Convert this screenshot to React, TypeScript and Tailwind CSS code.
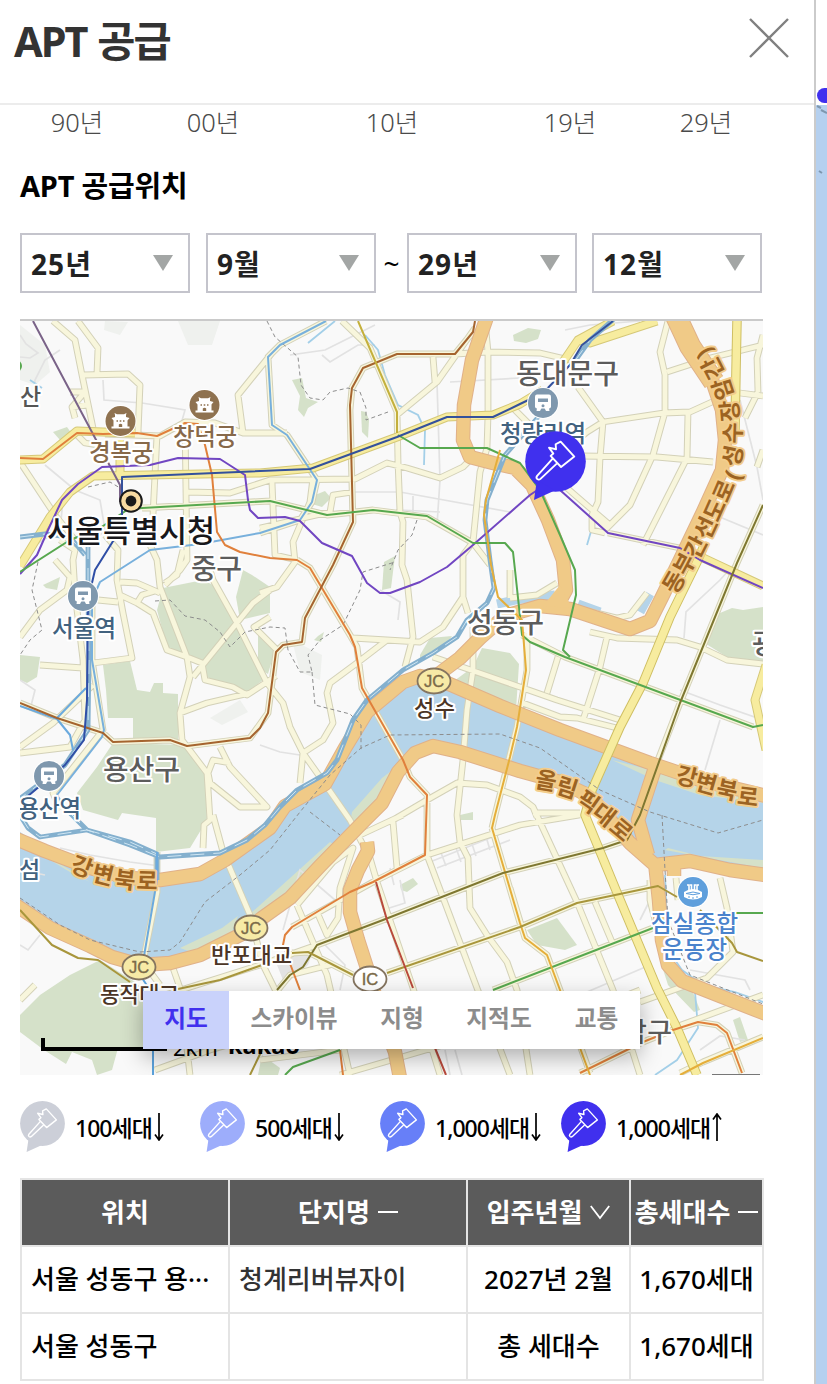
import { useState } from "react";
import type { ReactNode } from "react";

const YEARS = [
  { label: "90년", cell: "w-[154px]" },
  { label: "00년", cell: "w-[118px]" },
  { label: "10년", cell: "w-[240px]" },
  { label: "19년", cell: "w-[116px]" },
  { label: "29년", cell: "w-[156px]" },
];

const TABS = [
  { label: "지도", cell: "w-[86px]" },
  { label: "스카이뷰", cell: "w-[130px]" },
  { label: "지형", cell: "w-[86px]" },
  { label: "지적도", cell: "w-[108px]" },
  { label: "교통", cell: "w-[87px]" },
];

const LEGEND = [
  { label: "100세대", arrow: "↓", color: "#cccfd8", cell: "w-[180px]" },
  { label: "500세대", arrow: "↓", color: "#9dadfb", cell: "w-[180px]" },
  { label: "1,000세대", arrow: "↓", color: "#677ff8", cell: "w-[181px]" },
  { label: "1,000세대", arrow: "↑", color: "#4030ee", cell: "w-[180px]" },
];

// ---- map geometry ----

const RIVER =
  "M20 832L45 848L90 866L160 878L200 873L225 858L270 828L285 804L325 782L345 745L367 710L403 680L440 676L500 706L560 733L650 765L763 795V872L690 860L655 862L623 842L590 795L520 771L460 752L433 745L413 755L396 780L376 808L350 826L318 866L285 905L250 925L200 955L170 964L140 966L110 957L90 945L50 928L20 907Z";

const PARKS = [
  "M163 588L203 580L215 586L227 603L237 625L267 677L247 692L228 686L207 677L202 660L187 655L167 647L157 610Z",
  "M243 570L252 575L270 587V613L253 617L240 620L236 597Z",
  "M103 665L130 661L137 690L150 692L154 683H163V693L178 694V740L133 738V718H108L106 690Z",
  "M113 743L187 745L205 773L207 820L190 848L156 852V818L122 813L118 820L83 810L77 793L97 767Z",
  "M20 655L40 657L37 677L27 683L20 680Z",
  "M20 1032V1015L40 995L70 975L100 960L135 982L155 1000L145 1048L118 1048L112 1070L97 1075L92 1060L72 1052L66 1064L44 1050Z",
  "M258 625L275 650L268 674L258 668Z",
  "M384 562L395 556L391 588L382 590Z",
  "M318 636L324 632L321 642L314 640Z",
  "M420 655L430 638L452 636L445 646L420 662Z",
  "M482 648L510 653L519 664L516 710L450 684L473 667Z",
  "M720 613L732 608L743 610L763 607V662L727 657L703 642Z",
  "M527 930L557 918L577 945L565 950L537 945Z",
  "M400 885L413 878L418 884L407 892L401 890Z",
  "M292 380L302 378L306 398L318 402L308 408L304 417L298 410L300 396Z",
  "M361 411L366 412L369 420L368 438L362 432Z",
  "M310 497L325 491L331 498L322 507L312 504Z",
  "M513 335L528 328L541 330L538 339L526 343L514 341Z",
  "M53 432L67 427L72 434L60 440Z",
  "M43 585L60 577L57 590L46 588Z",
  "M460 815L473 812V820H461Z",
  "M258 1075L262 1055L280 1068L278 1075Z",
  "M658 930L670 960L690 985L700 1010L694 1012L668 985L660 960Z",
  "M733 1020L740 1017L748 1040L740 1042Z",
  "M612 760L655 780L700 795L763 803V797L690 780Z",
  "M665 850L763 868V860L700 856L668 848Z",
  "M350 824L376 806L398 770L408 758L382 778L352 812Z",
  "M20 842L70 872L90 882L60 864L20 836Z",
  "M240 923L330 842L336 846L290 904Z",
  "M180 948L222 928L238 916L230 938L200 955Z",
];

const HAZE = [
  "M20 325L45 345L50 372L35 385L20 380Z",
  "M105 321L128 322L120 335L104 330Z",
  "M178 321H220L212 345L188 345Z",
  "M292 640L322 655L320 680L300 672Z",
  "M210 718L240 700L248 712L222 725Z",
];

const LANES = [
  "M60 350L45 360L35 380L33 400",
  "M20 335L26 344L38 353L30 358L20 357",
  "M103 380L104 400L142 403L185 410L178 435",
  "M290 355L325 350L345 340L375 325",
  "M322 355L330 362L358 345L375 345",
  "M45 465L75 490L100 500L105 530L90 545",
  "M353 492L400 492L510 512",
  "M437 382L440 480L437 525",
  "M450 382L520 378",
  "M400 510L440 512M413 496V512",
  "M565 330L590 325L640 321",
  "M680 690L720 705L763 720M720 720L705 770",
  "M20 680L35 690L30 710",
  "M260 745L280 752L300 755",
  "M380 590L400 602L398 620",
  "M684 638L686 612L720 580L738 560",
  "M60 848L90 855L130 862L160 866",
  "M283 930L300 870L335 900",
  "M430 862L505 832M437 868L510 840M440 850L446 866M455 845L461 862M470 838L476 856M485 833L490 850",
  "M390 868L394 885M383 910L405 903L400 880",
  "M320 940L345 965L340 990",
  "M580 995L650 965M640 920L655 890",
  "M690 970L745 980L750 990M700 1050L720 1036L745 1040",
  "M445 1050L450 1075M455 1050L462 1075",
  "M740 400L757 467L763 500M715 515L763 535",
  "M20 945L28 950L40 935",
  "M20 870L45 875M35 545L60 530L63 500",
];

const STREETS = [
  "M53 321L75 340L82 375L93 428",
  "M78 321L98 348L97 373",
  "M83 375L128 374L140 385L138 433",
  "M70 392H85L72 407L75 418M72 407L87 405",
  "M75 433L85 443L103 446",
  "M105 434L160 436L185 422L215 423L243 433L287 433",
  "M272 353L238 395L243 433",
  "M157 435L153 515",
  "M185 422L187 560L180 570L165 585",
  "M187 492L230 493L270 480L355 479L387 463L407 468L440 478L463 467L475 455",
  "M20 462L55 515L75 540",
  "M60 540L75 550L73 560L75 593L83 660L85 720L70 747L20 753",
  "M342 321L370 348L397 412L398 462L400 512L403 522L402 565L407 580L413 637L405 667",
  "M475 328L437 382L397 415",
  "M433 357L435 382",
  "M473 332L455 354H397L363 368L352 388L350 410L353 522L333 565L305 618L302 642L283 645L276 652L268 713L250 738L187 746",
  "M455 354L487 352L540 353L570 360",
  "M485 321L488 352V415L487 448L480 472L473 542L463 555V597L468 613",
  "M272 482L275 555L297 560",
  "M313 478L310 502L293 542L295 562L277 587L260 593",
  "M260 528L330 512L333 495L353 492",
  "M142 508L270 501L327 515L373 510L427 517L473 543L490 565",
  "M326 321L280 345L268 357L272 425L287 435L317 480L312 502L300 520L260 533",
  "M668 321L660 352L665 375V412L653 455L630 505L607 528L592 515",
  "M667 372L710 358L763 345",
  "M603 422L663 413L690 412L712 402",
  "M578 387L603 422L600 458L598 502L592 515V530L605 533",
  "M603 422L587 432L565 450",
  "M580 456L657 457L713 462",
  "M688 412L687 458L643 545",
  "M560 482L590 508L610 525",
  "M608 533L680 548",
  "M763 335L757 358L758 392M740 393L763 396M745 418L758 392",
  "M757 467L763 450",
  "M510 405L530 425L545 430",
  "M20 637L40 610L67 590L70 577L55 560",
  "M93 663L132 658L123 613L117 580L118 550L105 535",
  "M40 665L83 668",
  "M98 600L118 602M120 582L137 583L160 593M120 595L137 603L153 613L167 650L187 657M137 603L142 595L155 591",
  "M150 545L157 560L160 587L187 657L190 677L180 713L182 740L207 773L210 820L204 825L203 848",
  "M165 583L177 575L183 550",
  "M207 560L213 580L237 623L267 683L283 703L290 727L303 753L320 777L350 820L370 858L377 882",
  "M270 590L253 603L193 677M270 617L254 627L277 650",
  "M187 657L202 663L205 680L233 687L247 695L276 676",
  "M180 713L207 703L250 693",
  "M20 747L53 723L93 685",
  "M20 703L57 718L103 733L113 742L170 740L187 746",
  "M92 600L92 660L103 730L53 793L60 810",
  "M220 747L230 767L267 807L240 807L210 783L208 773L213 760L230 763",
  "M297 560L310 568L350 635L357 647L362 688L403 760L410 777L427 795V855",
  "M353 638L420 642L443 627L463 597",
  "M387 640L357 663L330 683L327 693L333 723L323 740L303 753L300 783",
  "M473 627V670L467 710L463 760L457 815L460 842L468 858L470 908L487 935L507 962L517 990L530 1075",
  "M433 657L520 687L557 700L620 720",
  "M520 702L560 717L577 718L617 728",
  "M393 820L427 800L457 783L487 785L520 797L533 807L537 817",
  "M510 598L537 595L557 583M510 570V598",
  "M585 610L617 618L630 615L647 593",
  "M590 632L617 638L677 640L700 647L727 660L763 664",
  "M607 637L600 667L583 720",
  "M558 657L547 693",
  "M522 635L565 657L753 727",
  "M763 505L737 563L680 703L653 773",
  "M213 815L223 852L250 915L263 965L290 1020",
  "M157 852V892L143 962L160 985",
  "M173 968L180 988L190 1075",
  "M165 995L260 965L317 945L383 920L503 873L603 848L627 840",
  "M360 835L403 815M393 822L397 868M297 905L333 862L353 848L340 888L338 918L327 935L317 912",
  "M297 905L327 975L350 1075",
  "M377 882L413 988L440 1075",
  "M427 855L520 825L580 815M427 855L477 988L510 1075",
  "M427 855L373 882L292 927",
  "M387 973L520 927L577 903L658 886",
  "M292 953L308 952L353 975",
  "M492 828L520 923M510 888L525 938L547 955L560 990L590 1073",
  "M527 633V670L517 727L495 815L492 828",
  "M533 807L577 902L613 990L640 1075M595 902L612 942",
  "M533 813L580 813",
  "M493 990L653 928",
  "M640 1002L707 978L733 952L727 908L720 878M763 870L766 880",
  "M673 1028L763 995",
  "M580 1073L643 1042L673 1030L698 1022L717 1025L727 1033L742 1073",
  "M680 1073L703 1062L763 1037",
  "M340 1075L460 1040L540 1030L640 990",
  "M155 1070L210 1050L280 1030M260 1060L340 1050",
  "M20 1000L35 985M650 880V900L655 920M676 878L678 900",
  "M270 1000L290 975L330 965",
];

const AVENUES = [
  "M18 460L43 459L77 431L103 432L135 433",
  "M20 566L50 517L70 492L93 476L260 473L313 468L397 437L447 417L493 415L520 404L543 390",
  "M563 362L578 340L613 321M578 340L590 343L657 321",
  "M120 440V475",
  "M699 556L763 586",
  "M766 665L755 700L766 750",
];

const BOULEVARDS = [
  "M737 321L736 370L735 430",
  "M703 548L697 562L670 617L643 683L620 727L592 790L585 815L618 895L657 988L677 1028L697 1075",
];

const HIGHWAYS = [
  "M14 838L45 851L90 868L130 878L160 880L200 874L225 860L270 828L285 806L325 784L345 748L367 712L403 682L420 676L440 680L500 706L560 730L650 763L700 780L766 796",
  "M14 904L50 928L90 946L112 957L140 965L170 963L200 955L240 935L262 918L290 898L320 866L365 820L382 803L398 772L415 753L433 746L460 752L520 771L560 782L590 796L610 820L630 843L655 865L690 861L730 870L766 875",
  "M436 676L460 658L480 638L505 616L540 606L570 609L600 619L630 629L650 621L662 597L680 560L703 512L722 470L725 440L722 410L712 380L690 345L676 314",
  "M488 314L472 360L464 405L463 440L470 457L493 463L515 468L532 485L548 520L563 560L566 590L556 608",
  "M655 768L638 820L648 855",
  "M655 862L659 900L662 940L668 965L682 981L720 996L766 1014",
  "M674 857V876",
  "M367 842L368 851L358 870L350 890V912L358 940L367 968L380 1012L395 1052L400 1078",
];

const RAILS = [
  "M615 318L590 340L572 365",
  "M540 415L505 455L487 500L485 520L490 560L494 588L487 603L467 620L457 637L433 653L403 670L367 700L353 720L337 760L327 773L297 790L280 807L265 825L247 840L220 853L160 857L130 845L87 830L40 837L28 828L18 812",
  "M70 813L87 830L130 842L157 854V880",
  "M88 545L88 600L89 660L88 730L65 765L18 800",
  "M20 537L45 534L70 537L85 555",
];

// [path, colour]
const LINES: [string, string][] = [
  ["M326 321L280 345L268 357L272 425L287 435L317 480L312 502L300 520L260 533L200 544L150 550L125 566L100 582L92 600V660L104 730L102 737L57 795L70 815", "#78b0dc"],
  ["M20 706L57 719L70 735L73 750M57 718L86 688M157 852V880L143 962", "#6baade"],
  ["M153 1048V1075M140 975L150 990", "#5ba2dc"],
  ["M33 321L120 485V502", "#7a6388"],
  ["M20 458L43 459L77 433L103 434L137 433L157 436L185 423L198 424L205 445L212 475L217 532L225 545L240 552L270 558L297 560L310 568L350 635L355 647L362 688L403 760L410 777L427 795L425 855L373 882L350 892L292 927L285 935L283 945L300 990", "#e0803c"],
  ["M340 1050L343 1075M580 1073L643 1042L673 1030L698 1022L717 1025L727 1033L742 1073", "#e0803c"],
  ["M475 321L473 332L455 354H397L363 368L352 388L350 405L353 522L333 565L305 618L302 642L283 645L276 652L268 713L260 728L250 738L187 746L170 740L113 742L103 733L57 718L20 703", "#a5642f"],
  ["M358 321L397 412V433", "#c4b03c"],
  ["M20 574L37 555L48 530L62 500L78 484L102 467L150 465L178 458L220 459L245 475L248 500L250 510L258 518L285 517L300 521L322 543L352 556L367 583L380 593H390L420 582L447 567L473 545L530 495L545 485L560 490L608 533L680 548L700 560L763 588", "#7146c2"],
  ["M20 572L70 540L100 528L127 510L142 508L270 501L327 515L373 510L427 516L473 543H505L513 552L515 570L522 635L530 642L565 657L753 727L763 725", "#57a84f"],
  ["M398 435L420 448H487L520 463L540 490L560 535L575 570L576 595L563 650L570 657", "#57a84f"],
  ["M493 990L653 928M732 913H763M340 1050L293 1067L285 1075", "#57a84f"],
  ["M122 515V477L215 473L310 469L397 437L447 417H493L520 404L543 393L570 365L582 345L613 321", "#34519c"],
  ["M115 538L95 570L88 600L87 700L84 740L65 765L28 796", "#2f4ea6"],
  ["M500 450L486 500L484 515L491 565L498 597L522 620L526 670L517 727L510 757L495 815L492 828L520 923L525 938L547 955L560 990L580 1048L590 1075", "#e5ae3a"],
  ["M680 1075L703 1063L763 1038", "#e5ae3a"],
  ["M277 990L290 975L303 967L317 945L383 920L503 873L603 848L627 840L640 815L680 703L737 563L763 505", "#7e7731"],
  ["M292 953L308 952L353 975M387 973L520 927L577 903L658 886L677 897M700 910L732 943L737 952L763 961M20 910L52 945L78 958L98 960L130 982M178 989L220 980L262 965M262 1050L250 1075", "#a8963c"],
  ["M376 882L387 920L413 988M435 1048L446 1075", "#b94a3c"],
];

const CREEKS =
  "M365 335L378 350L385 375L398 405L418 415L425 430L424 465M308 343L335 321M665 875L668 950L682 970L703 985L735 992L766 1003M695 992L698 1028L677 1060L655 1075M587 545L592 528M30 380L42 388";

const BORDERS =
  "M267 321L275 337L298 357L301 385L310 398L323 400L330 392L348 388L360 392L366 408L366 420L388 412M155 601L170 600L185 616L205 620L220 632L230 647L245 632L270 627L285 628L288 650L300 672L312 672L308 655L320 640L343 625L360 590L363 572L395 562M312 672L315 705L350 714L361 725V750M38 562L32 590L42 630L30 640L20 655M417 520L412 535L398 550L390 570M20 898L60 925L90 940L140 952L170 950L180 942L205 902L240 875L270 850L300 812L330 775L361 748L390 735L500 734L540 748L600 790L650 812L718 833L763 820M662 815L665 870L668 920L690 975L763 1004M310 812L340 835M88 487L110 482L120 488";

// ---- small drawings ----

function Gavel() {
  return (
    <g fill="none" stroke="#fff" strokeWidth="1.4" strokeLinejoin="round">
      <path d="M26.3 7.9L36.4 18.9L26.6 26.6L18.9 18.4L20.9 16.7L17.7 12.3L22.9 13.5L22.6 9.8Z" />
      <path d="M20.4 20.4L8.9 33.2Q7.9 34.6 9 35.5Q10.2 36.4 11.4 35.4L23.6 23.9" />
    </g>
  );
}

function Pin({ color, className }: { color: string; className?: string }) {
  return (
    <svg viewBox="0 0 45 51" className={className}>
      <circle cx="22.5" cy="22.5" r="22.4" fill={color} />
      <path d="M8.8 36L6.6 51L22 44Z" fill={color} />
      <Gavel />
    </svg>
  );
}

function Label({ x, y, w, size, color, weight = 500, children }: {
  x: number; y: number; w: number; size: number; color: string; weight?: number; children: string;
}) {
  return (
    <text x={x} y={y} fontSize={size} fill={color} fontWeight={weight} textLength={w}
      stroke="#fff" strokeWidth="4" strokeLinejoin="round" paintOrder="stroke">
      {children}
    </text>
  );
}

// one glyph of a road name, turned to follow the road: [char, x, y, angle]
function RoadName({ glyphs }: { glyphs: [string, number, number, number][] }) {
  return (
    <g fontSize="23" fontWeight="700" fill="#9c6322" stroke="#f3cd8c" strokeWidth="4" strokeLinejoin="round" paintOrder="stroke" textAnchor="middle">
      {glyphs.map(([c, x, y, a], i) => (
        <text key={i} transform={`translate(${x} ${y}) rotate(${a})`} y="8">{c}</text>
      ))}
    </g>
  );
}

function Badge({ x, y, color, children }: { x: number; y: number; color: string; children: ReactNode }) {
  return (
    <g transform={`translate(${x} ${y})`}>
      <circle r="16" fill="#fff" />
      <circle r="15" fill={color} />
      {children}
    </g>
  );
}

function Palace({ x, y }: { x: number; y: number }) {
  return (
    <Badge x={x} y={y} color="#8f7250">
      <path d="M-5.5 -6L-6 -8L-3.5 -6.8H3.5L6 -8L5.5 -6V-4L9 -3L7 -.5V5.5H9V7.5H-9V5.5H-7V-.5L-9 -3L-5.5 -4Z" fill="#fff" />
      <path d="M-4 0H-2.5M-.8 0H.8M2.5 0H4" stroke="#8f7250" strokeWidth="1.5" />
      <path d="M-1.7 6V3.5Q0 2 1.7 3.5V6Z" fill="#8f7250" />
    </Badge>
  );
}

function Station({ x, y }: { x: number; y: number }) {
  return (
    <Badge x={x} y={y} color="#7f98ae">
      <path d="M-6 -8.5H6Q8 -8.5 8 -6.5V3.5Q8 5.5 6 5.5H-6Q-8 5.5 -8 3.5V-6.5Q-8 -8.5 -6 -8.5Z" fill="#fff" />
      <path d="M-5 -4.5H5V-1H-5Z" fill="#7f98ae" />
      <circle cy="2.8" r="1.5" fill="#7f98ae" />
      <path d="M-6 5L-6.5 8H-3L-1.5 5ZM6 5L6.5 8H3L1.5 5Z" fill="#fff" />
    </Badge>
  );
}

function Junction({ x, y, fill = "#f7eaa6", children }: { x: number; y: number; fill?: string; children: string }) {
  return (
    <g transform={`translate(${x} ${y})`}>
      <ellipse rx="16.5" ry="12.5" fill={fill} stroke="#857560" strokeWidth="1.8" />
      <text y="6" fontSize="16.5" textAnchor="middle" fill="#7b6a48" stroke="#7b6a48" strokeWidth="0.4" fontFamily="Liberation Sans, sans-serif">{children}</text>
    </g>
  );
}

function CasedRoads({ paths, width, fill, edge }: { paths: string[]; width: number; fill: string; edge: string }) {
  const d = paths.join("");
  return (
    <g fill="none" strokeLinejoin="round">
      <path d={d} stroke={edge} strokeWidth={width + 2} />
      <path d={d} stroke={fill} strokeWidth={width} />
    </g>
  );
}

function SeoulMap() {
  return (
    <svg viewBox="20 321 743 754" className="block h-[754px] w-[743px]">
      <rect x="20" y="321" width="743" height="754" fill="#f9f9f9" />
      {HAZE.map((d) => <path key={d} d={d} fill="#eff1ee" />)}
      <path d={RIVER} fill="#b5d4e9" />
      <path d="M497 604L515 600L555 595M578 604L600 612M640 612L650 594" fill="none" stroke="#b5d4e9" strokeWidth="9" />
      {PARKS.map((d) => <path key={d} d={d} fill="#d5e1c9" />)}
      <circle cx="16" cy="366" r="6" fill="#57a84f" />
      <path d="M275 960L315 945L308 965L285 985Z" fill="#e3e3e3" />
      <path d={LANES.join("")} fill="none" stroke="#e2e2e2" strokeWidth="1.7" />
      <path d={CREEKS} fill="none" stroke="#a3cfe8" strokeWidth="1.8" />
      <CasedRoads paths={STREETS} width={4.8} fill="#f8f6dc" edge="#d3d1b8" />
      <CasedRoads paths={AVENUES} width={7} fill="#f7ec9f" edge="#d5c878" />
      <CasedRoads paths={HIGHWAYS} width={12.5} fill="#f0ca87" edge="#e0b189" />
      <path d="M676 316L690 346L714 382" fill="none" stroke="#e0b189" strokeWidth="22" />
      <path d="M676 316L690 346L714 382" fill="none" stroke="#f0ca87" strokeWidth="20" />
      <path d="M543 606L560 585L572 608Z" fill="#f0ca87" />
      <CasedRoads paths={BOULEVARDS} width={7.5} fill="#f7ec9f" edge="#cfbf63" />
      <path d={BORDERS} fill="none" stroke="#8d8d8d" strokeWidth="1" strokeDasharray="4 3" />
      <path d={RAILS.join("")} fill="none" stroke="#84b0ce" strokeWidth="4.8" strokeLinejoin="round" />
      <path d={RAILS.join("")} fill="none" stroke="#cfe6f3" strokeWidth="1" strokeDasharray="14 9" />
      {LINES.map(([d, color]) => (
        <path key={d} d={d} fill="none" stroke={color} strokeWidth="2" strokeLinejoin="round" />
      ))}

      <RoadName glyphs={[["강", 82, 867, 20], ["변", 103, 875, 14], ["북", 125, 880, 7], ["로", 147, 881, 2]]} />
      <RoadName glyphs={[["강", 687, 777, 14], ["변", 706, 784, 16], ["북", 727, 790, 12], ["로", 748, 797, 7]]} />
      <RoadName glyphs={[["올", 546, 781, 10], ["림", 567, 788, 18], ["픽", 588, 802, 35], ["대", 604, 815, 38], ["로", 621, 830, 40]]} />
      <RoadName
        glyphs={[
          ["동", 674, 582, -60], ["부", 685, 564, -62], ["간", 696, 547, -63], ["선", 706, 528, -65],
          ["도", 715, 510, -66], ["로", 724, 491, -67], ["(", 733, 475, -70], ["성", 733, 456, -78],
          ["수", 733, 433, -88], ["장", 730, 411, -95], ["암", 723, 389, -108], ["간", 713, 368, -117], [")", 704, 353, -120],
        ]}
      />

      <Label x={20} y={405} w={20} size={23} color="#555">산</Label>
      <Label x={89} y={461} w={64} size={23.5} color="#87694a">경복궁</Label>
      <Label x={173} y={445} w={64} size={23.5} color="#87694a">창덕궁</Label>
      <Label x={516} y={384} w={103} size={28} color="#5c5c5c">동대문구</Label>
      <Label x={500} y={442} w={86} size={23.5} color="#42627f">청량리역</Label>
      <Label x={191} y={579} w={51} size={28} color="#5c5c5c">중구</Label>
      <Label x={47} y={542} w={168} size={30.5} color="#17171b">서울특별시청</Label>
      <Label x={52} y={637} w={64} size={23.5} color="#42627f">서울역</Label>
      <Label x={467} y={633} w={77} size={28} color="#5c5c5c">성동구</Label>
      <Label x={414} y={716} w={41} size={22} color="#4b3526">성수</Label>
      <Label x={103} y={780} w={77} size={28} color="#5c5c5c">용산구</Label>
      <Label x={18} y={817} w={63} size={23.5} color="#42627f">용산역</Label>
      <Label x={19} y={878} w={21} size={23} color="#42627f">섬</Label>
      <Label x={752} y={654} w={25} size={28} color="#5c5c5c">광</Label>
      <Label x={211} y={963} w={81} size={22} color="#4b3526">반포대교</Label>
      <Label x={100} y={1002} w={79} size={22} color="#4b3526">동작대교</Label>
      <Label x={651} y={932} w={87} size={23.5} color="#4a83cc">잠실종합</Label>
      <Label x={662} y={958} w={65} size={23.5} color="#4a83cc">운동장</Label>
      <Label x={622} y={1042} w={50} size={27} color="#5c5c5c">남구</Label>

      <Palace x={120.5} y={421} />
      <Palace x={204.5} y={405} />
      <Station x={543} y={403} />
      <Station x={83} y={596} />
      <Station x={49} y={776} />
      <Badge x={693} y={892} color="#5f9fdc">
        <path d="M-9 0Q0 -6 9 0V5Q0 10 -9 5Z" fill="#fff" />
        <path d="M-4 -2V-7H-6M-1.5 -2V-7H-3M1.5 -2V-7H3M4 -2V-7H6" stroke="#fff" strokeWidth="1.6" fill="none" />
        <path d="M-7 1.5Q0 -1.5 7 1.5Q0 4 -7 1.5M-4 6V4M0 7V5M4 6V4" stroke="#5f9fdc" fill="none" />
      </Badge>
      <circle cx="131" cy="501" r="10.8" fill="#f8dba2" stroke="#1a1a1a" strokeWidth="2" />
      <circle cx="131" cy="501" r="5.4" fill="#1a1a1a" />
      <Junction x={434} y={681}>JC</Junction>
      <Junction x={251} y={928}>JC</Junction>
      <Junction x={139} y={967}>JC</Junction>
      <Junction x={370} y={979} fill="#fff">IC</Junction>
      <path d="M712 1075H760" stroke="#777" strokeWidth="2" />
    </svg>
  );
}

function Select({ value }: { value: string }) {
  return (
    <button className="flex h-[60px] w-[170px] items-center justify-between border-2 border-[#c4c4cc] pr-[15px] pl-[9px] text-[28px] font-bold tracking-[1.1px] text-[#222]">
      <span className="pt-0.5">{value}</span>
      <svg viewBox="0 0 20 16" className="h-4 w-5">
        <path d="M0 0H20L10 16Z" fill="#a3a6a5" />
      </svg>
    </button>
  );
}

function Dash() {
  return (
    <svg viewBox="0 0 20 20" className="h-5 w-5">
      <path d="M0 10H20" stroke="#fff" strokeWidth="2" />
    </svg>
  );
}

function Chevron() {
  return (
    <svg viewBox="0 0 20 20" className="h-5 w-5">
      <path d="M.8 4L10 16L19.2 4" stroke="#fff" strokeWidth="1.8" fill="none" />
    </svg>
  );
}

export default function App() {
  const [tab, setTab] = useState("지도");

  return (
    <div className="flex h-[1384px] w-[827px] overflow-hidden bg-white font-['Noto_Sans','Noto_Sans_CJK_KR',sans-serif]">
      <main className="w-[816px] shrink-0 border-r-2 border-[#cbcbcb]">
        <header className="flex h-[105px] items-start justify-between border-b-2 border-[#ececec] pr-[25px] pl-3.5">
          <h1 className="mt-[13px] text-[41.5px] leading-[56px] font-bold tracking-[-2px] text-[#333] [word-spacing:2px]">APT 공급</h1>
          <button aria-label="닫기" className="mt-[18px]">
            <svg viewBox="0 0 40 40" className="h-10 w-10">
              <path d="M1 1L39 39M39 1L1 39" stroke="#808080" strokeWidth="2.4" />
            </svg>
          </button>
        </header>

        <div className="flex h-[34px] items-center text-center text-[25.5px] font-light text-[#4a4a4a]">
          {YEARS.map((y) => (
            <span key={y.label} className={y.cell}>{y.label}</span>
          ))}
        </div>

        <div className="px-5">
          <h2 className="mt-[26px] h-[42px] text-[29px] leading-[42px] font-bold tracking-[-0.2px] text-black">APT 공급위치</h2>

          <div className="mt-[26px] flex h-[60px] w-[742px] items-center">
            <Select value="25년" />
            <span className="w-4" />
            <Select value="9월" />
            <span className="w-[31px] text-center text-[28px] text-black">~</span>
            <Select value="29년" />
            <span className="w-[15px]" />
            <Select value="12월" />
          </div>

          <section className="relative mt-[26px] w-[743px] overflow-hidden border-t-2 border-[#cacaca]">
            <SeoulMap />
            <Pin color="#4030ee" className="absolute top-[110px] left-[505px] h-[69px] w-[61px]" />
            <div className="absolute bottom-6 left-[21px] h-[13px] w-[126px] border-b-4 border-l-4 border-black" />
            <span className="absolute top-[712px] left-[153px] text-[22px] leading-7 text-black">2km</span>
            <span className="absolute top-[710px] left-[208px] text-[23.5px] leading-7 font-bold text-black">kakao</span>
            <div className="absolute top-[670px] left-[123px] flex h-[58px] bg-white shadow-[0_8px_22px_rgba(0,0,0,0.3)]">
              {TABS.map((t) => (
                <button
                  key={t.label}
                  onClick={() => setTab(t.label)}
                  className={`${t.cell} pb-0.5 text-[23.7px] font-bold ${
                    tab === t.label ? "bg-[#c9d2fb] text-[#4030ee]" : "text-[#8c8c8c]"
                  }`}
                >
                  {t.label}
                </button>
              ))}
            </div>
          </section>

          <div className="mt-[26px] flex h-[51px] w-[743px]">
            {LEGEND.map((l, i) => (
              <div key={i} className={`${l.cell} flex shrink-0 items-center`}>
                <Pin color={l.color} className="h-[51px] w-[45px] shrink-0" />
                <span className="ml-2.5 pt-[3px] text-[23px] font-medium tracking-[-1px] whitespace-nowrap text-black">{l.label}</span>
                <svg viewBox="0 0 10 28" className={`${l.arrow === "↑" ? "rotate-180" : ""} ml-0.5 h-7 w-2.5`}>
                  <path d="M5 0V26M1 21.5L5 27L9 21.5" stroke="#000" strokeWidth="1.7" fill="none" />
                </svg>
              </div>
            ))}
          </div>

          <table className="mt-[26px] w-[742px] table-fixed border-collapse text-[26px] leading-9 font-medium text-black">
            <colgroup>
              <col className="w-[208px]" />
              <col className="w-[238px]" />
              <col className="w-[163px]" />
              <col className="w-[133px]" />
            </colgroup>
            <thead>
              <tr className="h-[67px] bg-[#5b5b5b] font-bold text-white [&>th]:border-2 [&>th]:border-[#e4e4e4] [&>th]:p-0 [&>th]:pb-0.5">
                <th>위치</th>
                <th>
                  <span className="flex items-center justify-center gap-2">단지명<Dash /></span>
                </th>
                <th>
                  <span className="flex items-center justify-center gap-2">입주년월<Chevron /></span>
                </th>
                <th>
                  <span className="flex items-center justify-center gap-2 whitespace-nowrap">총세대수<Dash /></span>
                </th>
              </tr>
            </thead>
            <tbody className="[&_td]:border-2 [&_td]:border-[#e4e4e4] [&_td]:p-0 [&_td]:pb-0.5 [&_td]:whitespace-nowrap">
              <tr className="h-[67px]">
                <td><span className="pl-[9px]">서울 성동구 용···</span></td>
                <td><span className="pl-[9px] text-[#333]">청계리버뷰자이</span></td>
                <td className="text-center">2027년 2월</td>
                <td className="text-center">1,670세대</td>
              </tr>
              <tr className="h-[67px]">
                <td><span className="pl-[9px]">서울 성동구</span></td>
                <td />
                <td className="text-center">총 세대수</td>
                <td className="text-center">1,670세대</td>
              </tr>
            </tbody>
          </table>
        </div>
      </main>

      {/* sliver of the page behind the panel */}
      <aside className="relative w-[11px] overflow-hidden">
        <div className="h-[105px] bg-white" />
        <div className="h-[1279px] bg-[#b5d0ef]" />
        <div className="absolute top-[88px] left-px h-[15px] w-6 rounded-full bg-[#4030ee]" />
        <svg viewBox="0 0 11 80" className="absolute top-[103px] left-0 h-20 w-[11px]">
          <path d="M1 3L5 5M5 7L11 10M3 68L6 70" stroke="#7e97ae" strokeWidth="2" fill="none" />
        </svg>
      </aside>
    </div>
  );
}
